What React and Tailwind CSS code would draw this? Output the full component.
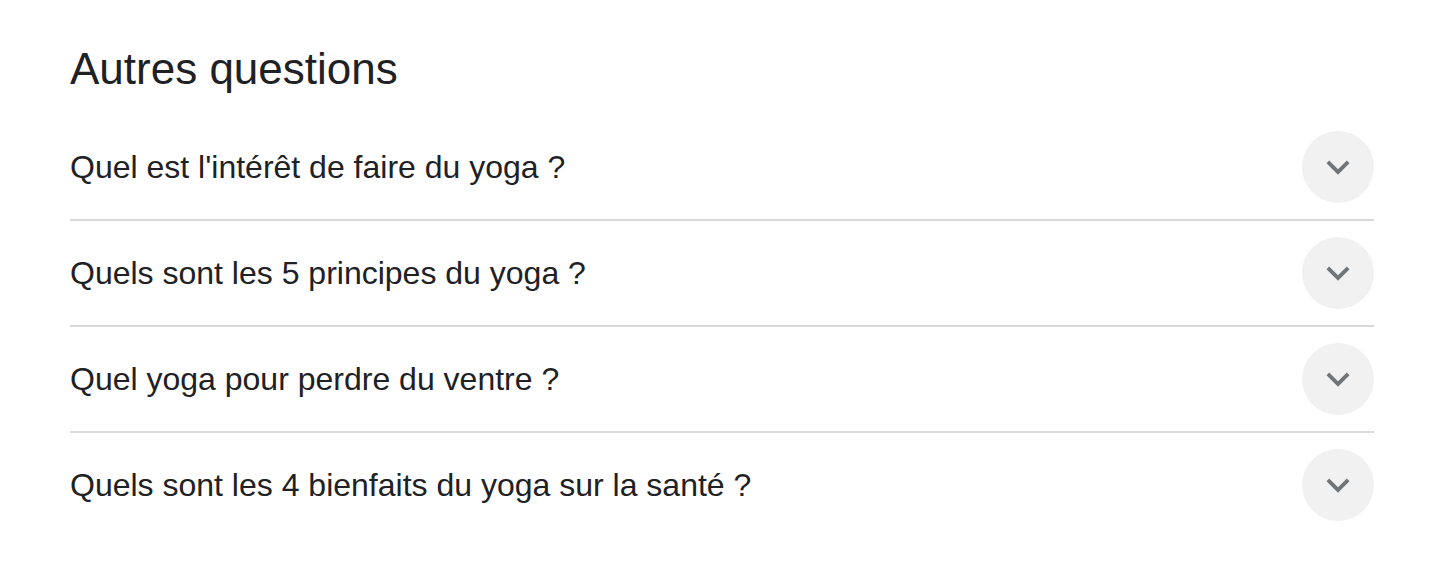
import React from "react";

const questions = [
  "Quel est l'intérêt de faire du yoga ?",
  "Quels sont les 5 principes du yoga ?",
  "Quel yoga pour perdre du ventre ?",
  "Quels sont les 4 bienfaits du yoga sur la santé ?",
];

function Chevron() {
  return (
    <svg width="46" height="46" viewBox="0 0 24 24" fill="#70757a">
      <path d="M16.59 8.59L12 13.17 7.41 8.59 6 10l6 6 6-6z" />
    </svg>
  );
}

export default function App() {
  return (
    <div
      className="bg-white w-[1446px] h-[570px] pl-[70px] pr-[72px] pt-[41px]"
      style={{ fontFamily: '"Liberation Sans", Arial, sans-serif' }}
    >
      <h2 className="text-[44px] leading-[56px] text-[#202124] font-normal">
        Autres questions
      </h2>
      <div className="mt-[18px] flex flex-col">
        {questions.map((q, i) => (
          <div
            key={i}
            className={
              i < questions.length - 1
                ? "h-[106px] flex items-center justify-between border-b-2 border-[#d9d9d9]"
                : "h-[104px] flex items-center justify-between"
            }
          >
            <span className="text-[32px] leading-[40px] text-[#202124]">{q}</span>
            <div className="w-[72px] h-[72px] rounded-full bg-[#f1f1f1] flex items-center justify-center">
              <Chevron />
            </div>
          </div>
        ))}
      </div>
    </div>
  );
}
